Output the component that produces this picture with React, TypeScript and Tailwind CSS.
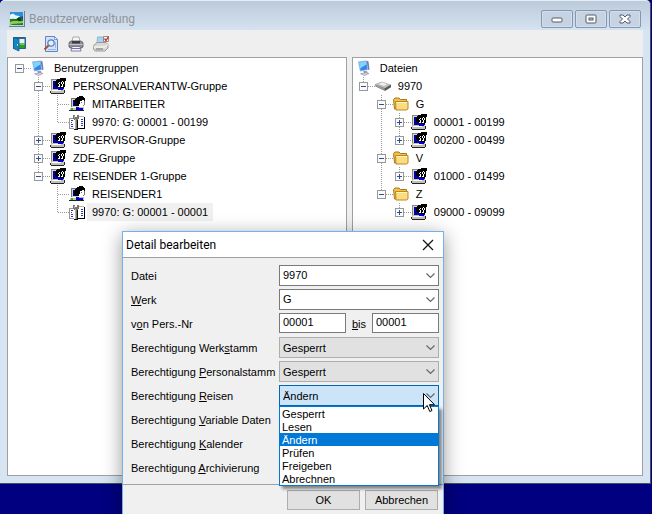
import { useState, type ReactNode } from "react";

type IconName = "computer" | "group" | "user" | "binder" | "drive" | "folder";

interface TreeNode {
  label: string;
  icon: IconName;
  open?: boolean;
  closed?: boolean;
  selected?: boolean;
  children?: TreeNode[];
}

const groupTree: TreeNode = {
  label: "Benutzergruppen",
  icon: "computer",
  open: true,
  children: [
    {
      label: "PERSONALVERANTW-Gruppe",
      icon: "group",
      open: true,
      children: [
        { label: "MITARBEITER", icon: "user" },
        { label: "9970: G: 00001 - 00199", icon: "binder" },
      ],
    },
    { label: "SUPERVISOR-Gruppe", icon: "group", closed: true },
    { label: "ZDE-Gruppe", icon: "group", closed: true },
    {
      label: "REISENDER 1-Gruppe",
      icon: "group",
      open: true,
      children: [
        { label: "REISENDER1", icon: "user" },
        { label: "9970: G: 00001 - 00001", icon: "binder", selected: true },
      ],
    },
  ],
};

const fileTree: TreeNode = {
  label: "Dateien",
  icon: "computer",
  children: [
    {
      label: "9970",
      icon: "drive",
      open: true,
      children: [
        {
          label: "G",
          icon: "folder",
          open: true,
          children: [
            { label: "00001 - 00199", icon: "group", closed: true },
            { label: "00200 - 00499", icon: "group", closed: true },
          ],
        },
        {
          label: "V",
          icon: "folder",
          open: true,
          children: [{ label: "01000 - 01499", icon: "group", closed: true }],
        },
        {
          label: "Z",
          icon: "folder",
          open: true,
          children: [{ label: "09000 - 09099", icon: "group", closed: true }],
        },
      ],
    },
  ],
};

const rights = ["Gesperrt", "Lesen", "Ändern", "Prüfen", "Freigeben", "Abrechnen"];

function Pixels({ children, size = 16 }: { children: ReactNode; size?: number }) {
  return (
    <svg width={size} height={size} viewBox="0 0 16 16" className="shrink-0" aria-hidden="true">
      {children}
    </svg>
  );
}

function TreeIcon({ name }: { name: IconName }) {
  switch (name) {
    case "computer":
      return (
        <Pixels>
          <path d="M1 1.500 9.500.5l1.500 9.500-8 1.500z" fill="#9db4e4" />
          <path d="m2 2.500 7-.9 1.200 7.600-6.500 1.200z" fill="#2f86e8" />
          <path d="m2 2.500 7-.9.400 3L3 8.500z" fill="#7fd4fb" />
          <path d="m9.500.5 2 1 1 8-1.500.5z" fill="#6a7fb4" />
          <path d="M6 11h4l.5 2H7z" fill="#9a9cb8" />
          <path d="m3.500 13.800 6-1.300 2.500 1-4.500 2z" fill="#d0d0de" stroke="#8a8aa4" strokeWidth=".6" />
        </Pixels>
      );
    case "group":
      return (
        <Pixels>
          <g shapeRendering="crispEdges">
            <path d="M1 1h8v10H1z" fill="#dcd8cc" />
            <path d="M1 1h6v1H2v9H1z" fill="#8c8878" />
            <path d="M3 3h7v8H3z" fill="#0000a8" />
            <path d="M1 11h13v4H1z" fill="#c4c0b2" />
            <path d="M2 12h9v1H2z" fill="#fff" />
            <path d="M0 13h1v2h13v1H1v-1H0zM14 12h1v3h-1z" fill="#222" />
            <path d="M7 1h3V0h6v3h-1v6h-1v1h-4V9H6V8H5V4h1V2h1z" fill="#000" />
            <path d="M9 4h1v1H9zM8 5h1v1H8zM9 6h1v2H9zM8 8h2v1H8z" fill="#fff" />
            <path d="M12 3h1v1h-1zM11 4h1v2h-1zM13 4h1v2h-1zM12 6h1v2h-1zM11 8h2v1h-2z" fill="#fff" />
            <path d="M6 10h3v1H6zM9 10h5v1h-1v1H8v-1h1z" fill="#0000c8" />
          </g>
        </Pixels>
      );
    case "user":
      return (
        <Pixels>
          <g shapeRendering="crispEdges">
            <path d="M2 2h7v9H2z" fill="#d4d0c4" />
            <path d="M2 2h6v1H3v8H2z" fill="#77746a" />
            <path d="M4 4h4v6H4z" fill="#0000a8" />
            <path d="M1 11h14v4H1z" fill="#c8c4b4" />
            <path d="M1 11h6v1H1z" fill="#fff" />
            <path d="M0 14h15v1H0z" fill="#222" />
            <path d="M2 12h2v2H2z" fill="#18b838" />
            <path d="M7 2h1V1h2V0h4v1h1v1h1v3h-1V4h-2v2h-1v3h-1v1H6V9H5V5h1V3h1z" fill="#000" />
            <path d="M11 5h4v4h-1v1h-4V8h1z" fill="#fff" />
            <path d="M15 5h1v4h-1zM14 9h1v1h-1zM12 6h1v1h-1z" fill="#777" />
            <path d="M7 11h3v1h4v2H7z" fill="#0000c8" />
          </g>
        </Pixels>
      );
    case "binder":
      return (
        <Pixels>
          <g shapeRendering="crispEdges">
            <path d="M0 4h5v11H0z" fill="#fff" />
            <path d="M0 4h1v11H0zM1 4h3v1H1zM1 14h4v1H1z" fill="#9a9888" />
            <path d="M2 6h2v1H2zM2 8h1v1H2zM2 10h2v1H2zM2 12h2v1H2z" fill="#2838c8" />
            <path d="M10 3h5v11h-5z" fill="#fff" />
            <path d="M15 3h1v12h-1zM9 14h6v1H9z" fill="#000" />
            <path d="M10 2h5v1h-5z" fill="#b8b4a0" />
            <path d="M12 5h2v1h-2zM12 7h2v1h-2zM12 9h2v1h-2zM12 11h2v1h-2z" fill="#2838c8" />
            <path d="M4 1h2v2h2V1h2v4H9v1H8v9H6V6H5V5H4z" fill="#77756c" />
            <path d="M6 5h1v10H6zM5 2h1v2H5z" fill="#b4b0a0" />
            <path d="M8 6h1v9H8zM5 15h4v1H5z" fill="#111" />
          </g>
        </Pixels>
      );
    case "drive":
      return (
        <Pixels>
          <path d="M0 6 6.500 3.500 16 6.500 10 10z" fill="#bdbdbd" />
          <path d="m0 6 10 4v3L.5 8.500z" fill="#808080" />
          <path d="m10 10 6-3.500v2.800L10 13z" fill="#585858" />
          <path d="m3.500 6 3.500-1.500 5 1.700L9 8z" fill="#f0f0f0" />
          <path d="m1 7.500 8 3.500" stroke="#b4b4b4" strokeWidth=".7" />
        </Pixels>
      );
    case "folder":
      return (
        <Pixels>
          <path d="M.5 3.500 2 2h4l1.500 1.500h6V13H1.500z" fill="#f0c04c" stroke="#a87818" />
          <path d="M2.500 5.500h12.500v7.500l-1.500 1H3z" fill="#fbdc82" stroke="#b98a20" />
          <path d="M3.500 6.500h10.500" stroke="#fff4c4" />
        </Pixels>
      );
  }
}

function Rail({ isLast, expander, stemUp }: { isLast: boolean; expander?: "+" | "-"; stemUp: boolean }) {
  return (
    <svg width="18" height="18" className="shrink-0 overflow-visible" shapeRendering="crispEdges" aria-hidden="true">
      {stemUp && <path d="M9.500 0v9" stroke="#9a9a9a" strokeDasharray="1 1" />}
      {!isLast && <path d="M9.500 10v8" stroke="#9a9a9a" strokeDasharray="1 1" />}
      <path d="M10 9.500h11" stroke="#9a9a9a" strokeDasharray="1 1" />
      {expander && (
        <>
          <rect x="5.500" y="5.500" width="8" height="8" rx="1" fill="#fafafa" stroke="#989898" />
          <path d={expander === "+" ? "M7 9.500h5M9.500 7v5" : "M7 9.500h5"} stroke="#2f4f9c" />
        </>
      )}
    </svg>
  );
}

interface RowsProps {
  node: TreeNode;
  rails?: boolean[];
  isLast?: boolean;
  root?: boolean;
  tight?: boolean;
}

function TreeRows({ node, rails = [], isLast = true, root = false, tight = false }: RowsProps) {
  const expander = node.open ? "-" : node.closed ? "+" : undefined;
  const hasCell = !root || expander !== undefined;
  const childRails = hasCell ? [...rails, !isLast] : rails;
  return (
    <li>
      <div className="flex h-[18px] items-center">
        {rails.map((on, i) => (
          <svg
            key={i}
            width="18"
            height="18"
            className={tight ? "shrink-0" : "mr-px shrink-0"}
            shapeRendering="crispEdges"
            aria-hidden="true"
          >
            {on && <path d="M9.500 0v18" stroke="#9a9a9a" strokeDasharray="1 1" />}
          </svg>
        ))}
        {hasCell && <Rail isLast={isLast} expander={expander} stemUp={!root} />}
        <span className="flex items-center pl-[3px]">
          <TreeIcon name={node.icon} />
          <span
            className={
              node.selected
                ? "ml-[2px] bg-[#f0f0f0] px-[5px] leading-[18px] whitespace-nowrap"
                : "ml-[2px] px-[5px] leading-[18px] whitespace-nowrap"
            }
          >
            {node.label}
          </span>
        </span>
      </div>
      {node.children && (
        <ul>
          {node.children.map((child, i) => (
            <TreeRows
              key={child.label}
              node={child}
              rails={childRails}
              isLast={i === node.children!.length - 1}
              tight={tight}
            />
          ))}
        </ul>
      )}
    </li>
  );
}

function AppIcon() {
  return (
    <Pixels>
      <path d="M0 0h16v16H0z" fill="#6c7d8c" />
      <path d="M0 0h15v15H0z" fill="#c4d2de" />
      <path d="M1 1h13v13H1z" fill="#1c4f86" />
      <path d="M1 1h13v4L9 7 1 6z" fill="#2d8fd8" />
      <path d="M1 4c2-2 4-1 5 0s4 0 5 2l-4 2H1z" fill="#e8f6fc" />
      <path d="M1 9c3-2 4-1 6 0l3-3 4 3v5H1z" fill="#1f7a2c" />
      <path d="M1 11c4-2 8 0 13-1v2c-5 1-9 0-13 2z" fill="#8ed048" />
      <path d="M8 8l2-2 2 2v2H9z" fill="#0c4418" />
    </Pixels>
  );
}

function ExitIcon() {
  return (
    <Pixels>
      <path d="M1.500 1.500h12v11h-12z" fill="#2c6c94" stroke="#2c5f84" />
      <path d="M7 3h5.500v4.500H7z" fill="#e4f4fa" />
      <path d="M7 7.500h5.500V12H7z" fill="#2fa01c" />
      <path d="M7 7.500h5.500V9L7 8.500z" fill="#8ad060" />
      <path d="M1.500 1.500 7 3v12l-5.500-2.500z" fill="#1486c4" stroke="#0b5f92" strokeWidth=".8" />
      <path d="M5 8h1v1.500H5z" fill="#fff" />
    </Pixels>
  );
}

function PreviewIcon() {
  return (
    <Pixels>
      <path d="M2.500.5h9l3 3v12h-12z" fill="#d4e2fa" stroke="#5f83cc" />
      <path d="M11.500.5v3h3z" fill="#fff" stroke="#5f83cc" strokeWidth=".8" />
      <path d="M5 13.500h8M12.500 6v6" stroke="#9cb6e6" />
      <circle cx="8" cy="7" r="3.200" fill="#d8f2ff" stroke="#5d7cae" strokeWidth="1.200" />
      <path d="m5.500 9.500-4 4" stroke="#a0522d" strokeWidth="2" />
    </Pixels>
  );
}

function PrinterIcon() {
  return (
    <Pixels>
      <path d="M4 5.500 5 1h6l1 4.500z" fill="#f6f6f6" stroke="#999" strokeWidth=".8" />
      <path d="M1 6.500 3 5h10l2 1.500V11l-1.500 1h-11L1 11z" fill="#8d8d96" stroke="#5c5c66" strokeWidth=".8" />
      <path d="M4 5h8v2.500H4z" fill="#3d3d48" />
      <path d="M1.500 8.500h13" stroke="#c6c6d0" />
      <path d="M4 10.500h8l1 4.500H3z" fill="#f4f4fa" stroke="#66668c" strokeWidth=".8" />
      <path d="M4 12.500h8" stroke="#5050b0" strokeWidth=".8" />
    </Pixels>
  );
}

function PrintSetupIcon() {
  return (
    <Pixels>
      <path d="M4 7.500 4.500 1h6l.5 6.500z" fill="#a8d4f6" stroke="#88a8c4" strokeWidth=".8" />
      <path d="m1 9 3-2.500h9l2 2V12l-3 3H2l-1.500-2z" fill="#d8d8d4" stroke="#8c8c88" strokeWidth=".8" />
      <path d="M1 11h11l3-2.500" fill="none" stroke="#fff" />
      <path d="M3 13h7" stroke="#707070" />
      <path d="M10.500.5h5v5h-5z" fill="#fff" stroke="#777" strokeWidth=".8" />
      <path d="m11.500 2.500 1.500 2 2.500-4" fill="none" stroke="#d03020" strokeWidth="1.300" />
    </Pixels>
  );
}

function CaptionButton({ label, children }: { label: string; children: ReactNode }) {
  return (
    <button
      type="button"
      aria-label={label}
      className="flex h-[18px] w-8 items-center justify-center rounded-[2px] border border-[#8797b3] bg-[#c5d3e3] shadow-[inset_0_0_0_1px_#d3deea]"
    >
      <svg width="12" height="10" viewBox="0 0 12 10" aria-hidden="true">
        {children}
      </svg>
    </button>
  );
}

interface ComboProps {
  id: string;
  value: string;
  options?: string[];
  kind?: "edit" | "locked" | "active";
}

function Combo({ id, value, options = [value], kind = "locked" }: ComboProps) {
  const tones = {
    edit: "border-[#7a7a7a] bg-white pb-px",
    locked: "border-[#adadad] bg-[#e1e1e1] pt-px",
    active: "border-[#0067b5] bg-[#cce4f7] pt-px",
  };
  return (
    <div className="relative">
      <select
        id={id}
        defaultValue={value}
        className={`block h-[21px] w-full appearance-none rounded-none border px-[3px] outline-none ${tones[kind]}`}
      >
        {options.map((option) => (
          <option key={option}>{option}</option>
        ))}
      </select>
      <svg
        width="9"
        height="6"
        className="pointer-events-none absolute top-2 right-[4px]"
        aria-hidden="true"
      >
        <path d="m.5.500 4 4 4-4" fill="none" stroke="#666" strokeWidth="1.200" />
      </svg>
    </div>
  );
}

function Field({ id, label, children }: { id: string; label: ReactNode; children?: ReactNode }) {
  return (
    <div className="grid h-6 grid-cols-[148px_1fr]">
      <label htmlFor={id} className="leading-[22px] whitespace-nowrap">
        {label}
      </label>
      {children}
    </div>
  );
}

function RightsList() {
  const [active, setActive] = useState("Ändern");
  return (
    <ul
      role="listbox"
      aria-label="Berechtigung Reisen"
      className="absolute top-[21px] right-0 left-0 z-10 border border-[#0078d7] bg-white shadow-[3px_3px_3px_rgba(0,0,0,0.45)]"
    >
      {rights.map((right) => (
        <li
          key={right}
          role="option"
          aria-selected={right === active}
          onMouseEnter={() => setActive(right)}
          className={
            right === active
              ? "h-[13px] bg-[#0078d7] px-[2px] leading-[15px] text-white"
              : "h-[13px] px-[2px] leading-[15px]"
          }
        >
          {right}
        </li>
      ))}
    </ul>
  );
}

function DetailDialog() {
  const input = "h-5 w-full min-w-0 border border-[#7a7a7a] bg-white px-[3px] pb-[2px] outline-none";
  return (
    <div
      role="dialog"
      aria-label="Detail bearbeiten"
      className="absolute top-[231px] left-[122px] w-[322px] border border-[#72b1ee] bg-[#f0f0f0] shadow-[0_4px_18px_rgba(0,0,0,0.4)]"
    >
      <div className="flex h-[26px] items-center justify-between border-b border-[#a0a0a0] bg-white pr-[9px] pl-[3px]">
        <h2 className="font-[Roboto,sans-serif] text-[12px] leading-4">Detail bearbeiten</h2>
        <button type="button" aria-label="Schließen">
          <svg width="12" height="12" viewBox="0 0 12 12" aria-hidden="true">
            <path d="m1 1 10 10M11 1 1 11" stroke="#111" strokeWidth="1.200" />
          </svg>
        </button>
      </div>
      <div className="pt-[7px] pr-1 pl-2">
        <Field id="datei" label="Datei">
          <Combo id="datei" value="9970" kind="edit" />
        </Field>
        <Field id="werk" label={<><u>W</u>erk</>}>
          <Combo id="werk" value="G" kind="edit" />
        </Field>
        <Field id="von" label={<>v<u>o</u>n Pers.-Nr</>}>
          <div className="grid grid-cols-[1fr_26px_1fr]">
            <input id="von" defaultValue="00001" className={input} />
            <label htmlFor="bis" className="text-center leading-[22px]">
              <u>b</u>is
            </label>
            <input id="bis" defaultValue="00001" className={input} />
          </div>
        </Field>
        <Field id="werkstamm" label={<>Berechtigung Werk<u>s</u>tamm</>}>
          <Combo id="werkstamm" value="Gesperrt" options={rights} />
        </Field>
        <Field id="personalstamm" label={<>Berechtigung <u>P</u>ersonalstamm</>}>
          <Combo id="personalstamm" value="Gesperrt" options={rights} />
        </Field>
        <Field id="reisen" label={<>Berechtigung <u>R</u>eisen</>}>
          <div className="relative">
            <Combo id="reisen" value="Ändern" options={rights} kind="active" />
            <RightsList />
          </div>
        </Field>
        <Field id="variable" label={<>Berechtigung <u>V</u>ariable Daten</>}>
          <Combo id="variable" value="Gesperrt" options={rights} />
        </Field>
        <Field id="kalender" label={<>Berechtigung <u>K</u>alender</>}>
          <Combo id="kalender" value="Gesperrt" options={rights} />
        </Field>
        <Field id="archivierung" label={<>Berechtigung <u>A</u>rchivierung</>}>
          <Combo id="archivierung" value="Gesperrt" options={rights} />
        </Field>
      </div>
      <div className="mt-[3px] flex justify-end gap-[5px] border-t border-[#a0a0a0] pt-[5px] pr-[5px] pb-[5px]">
        <button type="button" className="h-5 w-[73px] border border-[#adadad] bg-[#e1e1e1]">
          OK
        </button>
        <button type="button" className="h-5 w-[73px] border border-[#adadad] bg-[#e1e1e1]">
          Abbrechen
        </button>
      </div>
    </div>
  );
}

export default function App() {
  return (
    <main className="relative flex h-screen flex-col overflow-hidden bg-[#000080] pr-px pb-[30px] font-['Liberation_Sans',sans-serif] text-[11px] text-black">
      <section className="flex flex-1 flex-col rounded-t-[5px] border-r border-b border-[#4a5058] bg-[#d7e4f2] px-[7px] pb-[7px]">
        <header className="-mx-[7px] flex h-[30px] shrink-0 items-center rounded-t-[5px] border-t border-[#e4ecf4] bg-linear-to-b from-[#bccbdb] to-[#d5e2f0] pt-[6px] pr-[9px] pl-[9px]">
          <AppIcon />
          <h1 className="ml-1 flex-1 font-[Roboto,sans-serif] text-[12px] leading-4 text-[#8f959c]">
            Benutzerverwaltung
          </h1>
          <div className="flex gap-[2px]">
            <CaptionButton label="Minimieren">
              <rect x="1" y="4" width="10" height="4" rx="1" fill="#fff" stroke="#555b66" />
            </CaptionButton>
            <CaptionButton label="Maximieren">
              <rect x="1" y="1" width="10" height="8" rx="1" fill="#fff" stroke="#555b66" />
              <rect x="4" y="4" width="4" height="2" fill="#c5d3e3" stroke="#555b66" />
            </CaptionButton>
            <CaptionButton label="Schließen">
              <path d="M1 1h3l2 2 2-2h3v1.500L8.500 5 11 7.500V9H8L6 7 4 9H1V7.500L3.500 5 1 2.500z" fill="#fff" stroke="#555b66" />
            </CaptionButton>
          </div>
        </header>
        <div className="flex h-[27px] shrink-0 items-center bg-[#efefef] pl-[5px]">
          <button type="button" aria-label="Beenden"><ExitIcon /></button>
          <button type="button" aria-label="Vorschau" className="ml-[15px]"><PreviewIcon /></button>
          <button type="button" aria-label="Drucken" className="ml-[9px]"><PrinterIcon /></button>
          <button type="button" aria-label="Drucker einrichten" className="ml-[9px]"><PrintSetupIcon /></button>
        </div>
        <div className="grid flex-1 grid-cols-[7fr_6fr] gap-[5px] bg-[#efefef]">
          <div className="border border-[#a0a0a0] bg-white pt-px pl-[2px]">
            <ul>
              <TreeRows node={groupTree} root />
            </ul>
          </div>
          <div className="border border-[#a0a0a0] bg-white pt-px pl-px">
            <ul>
              <TreeRows node={fileTree} root tight />
            </ul>
          </div>
        </div>
      </section>
      <DetailDialog />
      <svg
        width="13"
        height="20"
        viewBox="0 0 13 20"
        className="pointer-events-none absolute top-[393px] left-[423px] z-20"
        aria-hidden="true"
      >
        <path d="M.5.500v15.500l3.700-3.500 2.600 6 2.200-1-2.600-5.800h5.100z" fill="#fff" stroke="#000" />
      </svg>
    </main>
  );
}
